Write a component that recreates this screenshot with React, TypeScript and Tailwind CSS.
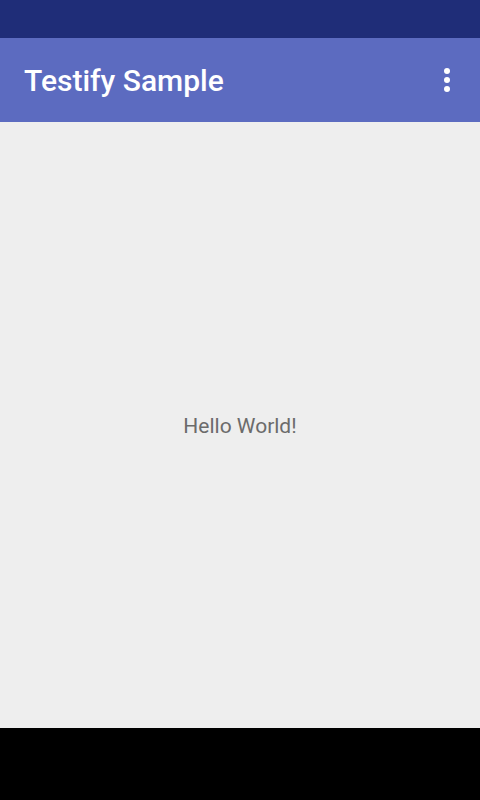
import React from 'react'

export default function App() {
    return (
        <div className="w-[480px] h-[800px] flex flex-col bg-[#eeeeee]" style={{ fontFamily: 'Roboto, "Noto Sans", sans-serif' }}>
            {/* Status bar */}
            <div className="h-[38px] bg-[#1f2d78] shrink-0" />

            {/* App bar */}
            <div className="h-[84px] bg-[#5c6bc0] shrink-0 flex items-center justify-between pl-6 pr-[30px]">
                <h1 className="text-white text-[30px] font-medium leading-none pt-[2px]">Testify Sample</h1>
                <div className="flex flex-col gap-[3px] items-center">
                    <span className="w-[6px] h-[6px] rounded-full bg-white" />
                    <span className="w-[6px] h-[6px] rounded-full bg-white" />
                    <span className="w-[6px] h-[6px] rounded-full bg-white" />
                </div>
            </div>

            {/* Content */}
            <div className="flex-1 flex items-center justify-center">
                <p className="text-[#6b6b6b] text-[21px] pt-1">Hello World!</p>
            </div>

            {/* Nav bar */}
            <div className="h-[72px] bg-black shrink-0" />
        </div>
    )
}
